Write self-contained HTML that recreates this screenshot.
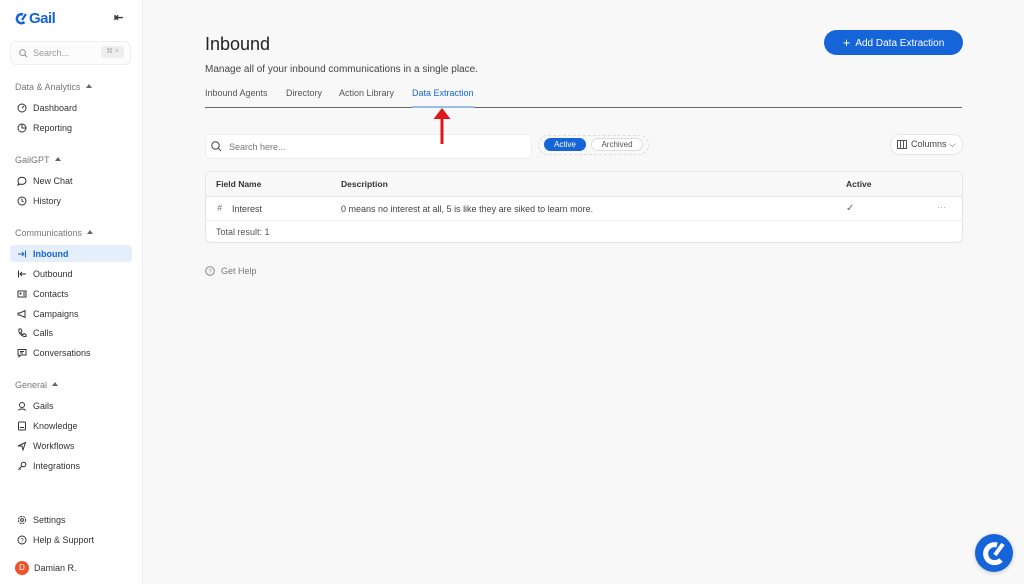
<!DOCTYPE html>
<html><head><meta charset="utf-8"><style>
*{box-sizing:border-box;margin:0;padding:0}
body{width:1024px;height:584px;overflow:hidden;font-family:"Liberation Sans",sans-serif;background:#f8f8f8;position:relative;color:#333}
.sb{position:absolute;left:0;top:0;width:143px;height:584px;background:#fff;border-right:1px solid #ececec}
.a{position:absolute;white-space:nowrap}
.it{position:absolute;left:15px;font-size:9px;color:#333;height:12px;line-height:12px;white-space:nowrap;width:120px}
.it svg{position:absolute;left:2px;top:1px;width:10px;height:10px}
.it span{position:absolute;left:18px;white-space:nowrap}
.sec{position:absolute;left:15px;font-size:9px;color:#777;white-space:nowrap}
.sec:after{content:"";display:inline-block;margin-left:5px;border-left:3px solid transparent;border-right:3px solid transparent;border-bottom:4px solid #666;vertical-align:2px}
</style></head><body>
<div class="sb">
 <svg class="a" style="left:15px;top:12px" width="13" height="13" viewBox="0 0 13 13"><path d="M8 2.5A4.5 4.5 0 1 0 9.5 10" fill="none" stroke="#1565d8" stroke-width="2.6"/><path d="M7 8L11 2" stroke="#1565d8" stroke-width="2.2"/></svg>
 <div class="a" style="left:29px;top:10px;font-size:15px;font-weight:bold;color:#1565d8;letter-spacing:-0.5px">Gail</div>
 <div class="a" style="left:114px;top:11px;font-size:11px;color:#333;font-weight:bold">⇤</div>
 <div class="a" style="left:10px;top:41px;width:121px;height:24px;border:1px solid #eee;border-radius:6px;background:#fcfcfc"></div>
 <svg class="a" style="left:19px;top:49px" width="9" height="9" viewBox="0 0 10 10"><circle cx="4" cy="4" r="3.2" fill="none" stroke="#888" stroke-width="1"/><path d="M6.5 6.5L9 9" stroke="#888"/></svg>
 <div class="a" style="left:33px;top:48px;font-size:9px;color:#999">Search...</div>
 <div class="a" style="left:101px;top:46px;width:23px;height:12px;background:#eee;border-radius:2px;font-size:7px;color:#aaa;text-align:center;line-height:12px">⌘ ×</div>
 <div class="sec" style="top:82px">Data &amp; Analytics</div>
 <div class="it" style="top:102px"><svg viewBox="0 0 10 10"><circle cx="5" cy="5" r="4" fill="none" stroke="#333"/><path d="M5 5L7 3" stroke="#333"/></svg><span>Dashboard</span></div>
 <div class="it" style="top:122px"><svg viewBox="0 0 10 10"><circle cx="5" cy="5" r="4" fill="none" stroke="#333"/><path d="M5 1V5H9" stroke="#333" fill="none"/></svg><span>Reporting</span></div>
 <div class="sec" style="top:155px">GailGPT</div>
 <div class="it" style="top:175px"><svg viewBox="0 0 10 10"><path d="M5 1.2C7.4 1.2 9 2.8 9 4.8S7.4 8.4 5 8.4C4.2 8.4 3.5 8.3 2.9 8L1 9 1.6 7.2C1.2 6.5 1 5.7 1 4.8 1 2.8 2.6 1.2 5 1.2Z" fill="none" stroke="#333"/></svg><span>New Chat</span></div>
 <div class="it" style="top:195px"><svg viewBox="0 0 10 10"><circle cx="5" cy="5" r="4" fill="none" stroke="#333"/><path d="M5 2.5V5L6.8 6" stroke="#333" fill="none"/></svg><span>History</span></div>
 <div class="sec" style="top:228px">Communications</div>
 <div class="a" style="left:10px;top:245px;width:122px;height:17px;background:#e5eefb;border-radius:4px"></div>
 <div class="it" style="top:248px;color:#1565d8;font-weight:bold"><svg viewBox="0 0 10 10"><path d="M1 5H7M5 3L7 5 5 7M8.5 1.5V8.5" stroke="#1565d8" fill="none"/></svg><span>Inbound</span></div>
 <div class="it" style="top:268px"><svg viewBox="0 0 10 10"><path d="M9 5H3M5 3L3 5 5 7M1.5 1.5V8.5" stroke="#333" fill="none"/></svg><span>Outbound</span></div>
 <div class="it" style="top:288px"><svg viewBox="0 0 10 10"><rect x="1" y="2" width="8" height="6" fill="none" stroke="#333"/><circle cx="3.5" cy="4.5" r="1" fill="#333"/><path d="M6 4H8M6 6H8" stroke="#333"/></svg><span>Contacts</span></div>
 <div class="it" style="top:308px"><svg viewBox="0 0 10 10"><path d="M1 4H3L8 1.5V8.5L3 6H1Z" fill="none" stroke="#333"/></svg><span>Campaigns</span></div>
 <div class="it" style="top:327px"><svg viewBox="0 0 10 10"><path d="M2 1L4 1 5 3.5 3.7 4.5C4.3 5.7 5 6.4 6 6.8L7 5.5 9 6.5 9 8.5C5 9 1 5 2 1Z" fill="none" stroke="#333"/></svg><span>Calls</span></div>
 <div class="it" style="top:347px"><svg viewBox="0 0 10 10"><path d="M1 1.5H9V7H4L2 8.8V7H1Z" fill="none" stroke="#333"/><path d="M3 3.5H7M3 5H6" stroke="#333"/></svg><span>Conversations</span></div>
 <div class="sec" style="top:380px">General</div>
 <div class="it" style="top:400px"><svg viewBox="0 0 10 10"><circle cx="5" cy="4" r="2.5" fill="none" stroke="#333"/><path d="M1.5 9.5C2 7.5 8 7.5 8.5 9.5" stroke="#333" fill="none"/></svg><span>Gails</span></div>
 <div class="it" style="top:420px"><svg viewBox="0 0 10 10"><rect x="1.5" y="1" width="7" height="8" rx="1" fill="none" stroke="#333"/><path d="M3 6.5H7" stroke="#333"/></svg><span>Knowledge</span></div>
 <div class="it" style="top:440px"><svg viewBox="0 0 10 10"><path d="M1 5L8.5 1.5 6 9 5 5Z" fill="none" stroke="#333"/></svg><span>Workflows</span></div>
 <div class="it" style="top:460px"><svg viewBox="0 0 10 10"><circle cx="6.5" cy="3.5" r="2.3" fill="none" stroke="#333"/><path d="M5 5L1.5 8.5M2.5 7.5L3.5 8.5" stroke="#333"/></svg><span>Integrations</span></div>
 <div class="it" style="top:514px"><svg viewBox="0 0 10 10"><circle cx="5" cy="5" r="3.6" fill="none" stroke="#333" stroke-dasharray="2 1"/><circle cx="5" cy="5" r="1.4" fill="none" stroke="#333"/></svg><span>Settings</span></div>
 <div class="it" style="top:534px"><svg viewBox="0 0 10 10"><circle cx="5" cy="5" r="4" fill="none" stroke="#333"/><text x="5" y="7.3" font-size="6" text-anchor="middle" fill="#333">?</text></svg><span>Help &amp; Support</span></div>
 <div class="a" style="left:15px;top:561px;width:14px;height:14px;border-radius:50%;background:#f0522a;color:#fff;font-size:8px;text-align:center;line-height:14px">D</div>
 <div class="a" style="left:34px;top:563px;font-size:9px;color:#333">Damian R.</div>
</div>

<div class="a" style="left:205px;top:34px;font-size:18px;color:#222">Inbound</div>
<div class="a" style="left:205px;top:64px;font-size:10px;color:#444">Manage all of your inbound communications in a single place.</div>
<div class="a" style="left:824px;top:30px;width:139px;height:25px;background:#1565d8;border-radius:13px;color:#fff;font-size:10px;line-height:25px;text-align:center"><span style="font-size:13px;vertical-align:-1px;margin-right:5px">+</span>Add Data Extraction</div>
<div class="a" style="left:205px;top:88px;font-size:9px;color:#555">Inbound Agents</div>
<div class="a" style="left:286px;top:88px;font-size:9px;color:#555">Directory</div>
<div class="a" style="left:339px;top:88px;font-size:9px;color:#555">Action Library</div>
<div class="a" style="left:412px;top:88px;font-size:9px;color:#1565d8">Data Extraction</div>
<div class="a" style="left:205px;top:107px;width:757px;height:1px;background:#666"></div>
<div class="a" style="left:412px;top:106px;width:62px;height:2px;background:#9bbbe9"></div>
<div class="a" style="left:205px;top:134px;width:327px;height:25px;background:#fff;border:1px solid #eee;border-radius:6px"></div>
<svg class="a" style="left:211px;top:141px" width="11" height="11" viewBox="0 0 11 11"><circle cx="4.5" cy="4.5" r="3.7" fill="none" stroke="#444"/><path d="M7.2 7.2L10 10" stroke="#444"/></svg>
<div class="a" style="left:229px;top:142px;font-size:9px;color:#777">Search here...</div>
<div class="a" style="left:538px;top:135px;width:111px;height:20px;border:1px dashed #ddd;border-radius:10px"></div>
<div class="a" style="left:544px;top:138px;width:42px;height:13px;background:#1565d8;border-radius:7px;color:#fff;font-size:8px;text-align:center;line-height:13px">Active</div>
<div class="a" style="left:591px;top:138px;width:52px;height:13px;background:#fff;border:1px solid #ddd;border-radius:7px;color:#555;font-size:8px;text-align:center;line-height:11px">Archived</div>
<div class="a" style="left:890px;top:134px;width:73px;height:21px;background:#fff;border:1px solid #e5e5e5;border-radius:10px;font-size:9px;color:#444;line-height:19px;padding-left:20px">Columns ⌵</div>
<svg class="a" style="left:897px;top:140px" width="10" height="9"><rect x="0.5" y="0.5" width="9" height="8" fill="none" stroke="#555"/><path d="M3.5 0.5V8.5M6.5 0.5V8.5" stroke="#555"/></svg>
<div class="a" style="left:205px;top:171px;width:758px;height:72px;background:#fff;border:1px solid #e5e5e5;border-radius:6px"></div>
<div class="a" style="left:206px;top:172px;width:756px;height:25px;background:#f9f9f9;border-bottom:1px solid #e5e5e5;border-radius:6px 6px 0 0"></div>
<div class="a" style="left:206px;top:220px;width:756px;height:1px;background:#eee"></div>
<div class="a" style="left:216px;top:179px;font-size:8.5px;color:#333;font-weight:bold">Field Name</div>
<div class="a" style="left:341px;top:179px;font-size:8.5px;color:#333;font-weight:bold">Description</div>
<div class="a" style="left:846px;top:179px;font-size:8.5px;color:#333;font-weight:bold">Active</div>
<div class="a" style="left:217px;top:203px;font-size:9px;color:#777;font-style:italic">#</div>
<div class="a" style="left:232px;top:204px;font-size:9px;color:#444">Interest</div>
<div class="a" style="left:341px;top:204px;font-size:9px;color:#444">0 means no interest at all, 5 is like they are siked to learn more.</div>
<div class="a" style="left:846px;top:203px;font-size:10px;color:#666">✓</div>
<div class="a" style="left:937px;top:202px;font-size:9px;color:#aaa">···</div>
<div class="a" style="left:216px;top:227px;font-size:9px;color:#555">Total result: 1</div>
<svg class="a" style="left:205px;top:266px" width="10" height="10" viewBox="0 0 10 10"><circle cx="5" cy="5" r="4.3" fill="none" stroke="#888"/><text x="5" y="7.5" font-size="6" text-anchor="middle" fill="#888">?</text></svg>
<div class="a" style="left:221px;top:266px;font-size:9px;color:#777">Get Help</div>
<svg class="a" style="left:432px;top:108px;width:20px;height:37px;z-index:5" width="20" height="37" viewBox="0 0 20 37"><path d="M10 0L18.5 11H11.5V36H8.5V11H1.5Z" fill="#e0161a"/></svg>
<div class="a" style="left:975px;top:534px;width:38px;height:38px;border-radius:50%;background:#1565d8;box-shadow:0 1px 4px rgba(0,0,0,.2)"></div>
<svg class="a" style="left:975px;top:534px" width="38" height="38" viewBox="0 0 38 38"><path d="M22 11A9 9 0 1 0 26 26" fill="none" stroke="#fff" stroke-width="5"/><path d="M20 21L28 10" stroke="#fff" stroke-width="4"/></svg>
</body></html>
